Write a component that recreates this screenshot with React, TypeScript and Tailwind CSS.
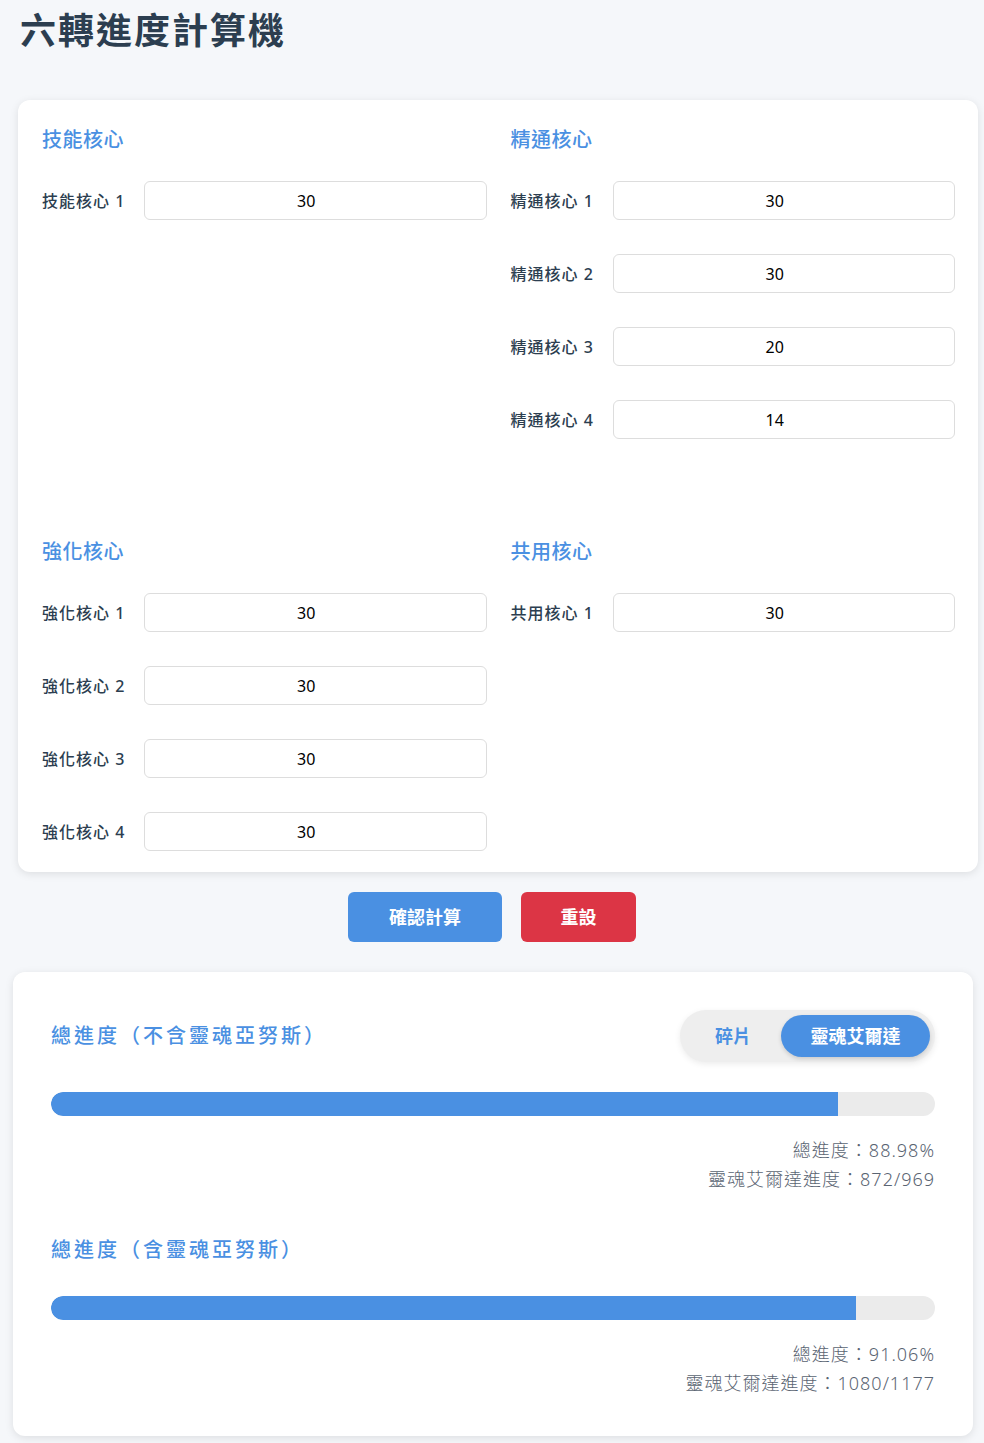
import { useState } from "react";

const FONT = { fontFamily: '"Noto Sans", "Noto Sans CJK TC", sans-serif' };

type Section = { title: string; name: string; values: number[] };

const SECTIONS: Section[] = [
  { title: "技能核心", name: "技能核心", values: [30] },
  { title: "精通核心", name: "精通核心", values: [30, 30, 20, 14] },
  { title: "強化核心", name: "強化核心", values: [30, 30, 30, 30] },
  { title: "共用核心", name: "共用核心", values: [30] },
];

function CoreSection({ section }: { section: Section }) {
  return (
    <div>
      <h3 className="text-[20px] leading-[32px] font-medium tracking-[0.5px] text-[#4a90e2] mb-[25px]">{section.title}</h3>
      <div className="flex flex-col gap-[34px]">
        {section.values.map((v, i) => (
          <div key={i} className="flex items-center">
            <label className="w-[102px] shrink-0 text-[16px] font-medium tracking-[1px] text-[#2c3e50]">
              {section.name} {i + 1}
            </label>
            <input
              defaultValue={v}
              className="flex-1 h-[39px] rounded-md border border-[#dddddd] bg-white pl-2 pr-[26px] text-center text-[16px] text-black outline-none"
            />
          </div>
        ))}
      </div>
    </div>
  );
}

function ProgressBlock({ title, pct, count, toggle }: { title: string; pct: number; count: string; toggle?: React.ReactNode }) {
  return (
    <div>
      <div className={`flex items-center justify-between ${toggle ? "h-[52px]" : "h-[32px]"}`}>
        <h3 className="text-[20px] font-medium tracking-[3px] text-[#4a90e2]">{title}</h3>
        {toggle}
      </div>
      <div className="mt-[30px] h-[24px] w-full rounded-full bg-[#ebebeb] overflow-hidden">
        <div className="h-full rounded-l-full bg-[#4a90e2]" style={{ width: `${pct}%` }} />
      </div>
      <div className="mt-[20px] text-right text-[18px] leading-[29px] font-light tracking-[1px] text-[#5a6472]">
        <div>總進度：{pct.toFixed(2)}%</div>
        <div>靈魂艾爾達進度：{count}</div>
      </div>
    </div>
  );
}

export default function App() {
  const [mode, setMode] = useState<"frag" | "erda">("erda");

  const toggle = (
    <div className="flex items-center h-[52px] w-[255px] rounded-full bg-[#eeeeee] p-[5px] shadow-[0_2px_6px_rgba(0,0,0,0.08)]">
      <button
        onClick={() => setMode("frag")}
        className={`h-[42px] flex-1 rounded-full text-[18px] font-bold ${mode === "frag" ? "bg-[#4a90e2] text-white" : "text-[#4a90e2]"}`}
      >
        碎片
      </button>
      <button
        onClick={() => setMode("erda")}
        className={`h-[42px] w-[149px] rounded-full text-[18px] font-bold ${mode === "erda" ? "bg-[#4a90e2] text-white shadow-[0_2px_4px_rgba(0,0,0,0.15)]" : "text-[#4a90e2]"}`}
      >
        靈魂艾爾達
      </button>
    </div>
  );

  return (
    <div className="min-h-[1443px] bg-[#f5f7fa] pb-[9px]" style={FONT}>
      <h1 className="pl-[20px] pt-[9px] text-[36px] leading-[44px] font-bold tracking-[2px] text-[#2c3e50]">六轉進度計算機</h1>

      <div className="mt-[47px] ml-[18px] w-[960px] rounded-xl bg-white pt-[24px] pb-[21px] pl-[24px] pr-[23px] shadow-[0_2px_8px_rgba(0,0,0,0.1)]">
        <div className="grid grid-cols-2 gap-x-6 gap-y-[97px]">
          {SECTIONS.map((s) => (
            <CoreSection key={s.title} section={s} />
          ))}
        </div>
      </div>

      <div className="mt-[20px] flex justify-center gap-[19px]">
        <button className="h-[50px] w-[154px] rounded-md bg-[#4a90e2] text-[18px] font-bold text-white">確認計算</button>
        <button className="h-[50px] w-[115px] rounded-md bg-[#dc3545] text-[18px] font-bold text-white">重設</button>
      </div>

      <div className="mt-[30px] ml-[13px] w-[960px] rounded-xl bg-white px-[38px] pt-[38px] pb-[38px] shadow-[0_2px_8px_rgba(0,0,0,0.1)]">
        <ProgressBlock title="總進度（不含靈魂亞努斯）" pct={88.98} count="872/969" toggle={toggle} />
        <div className="mt-[40px]">
          <ProgressBlock title="總進度（含靈魂亞努斯）" pct={91.06} count="1080/1177" />
        </div>
      </div>
    </div>
  );
}
